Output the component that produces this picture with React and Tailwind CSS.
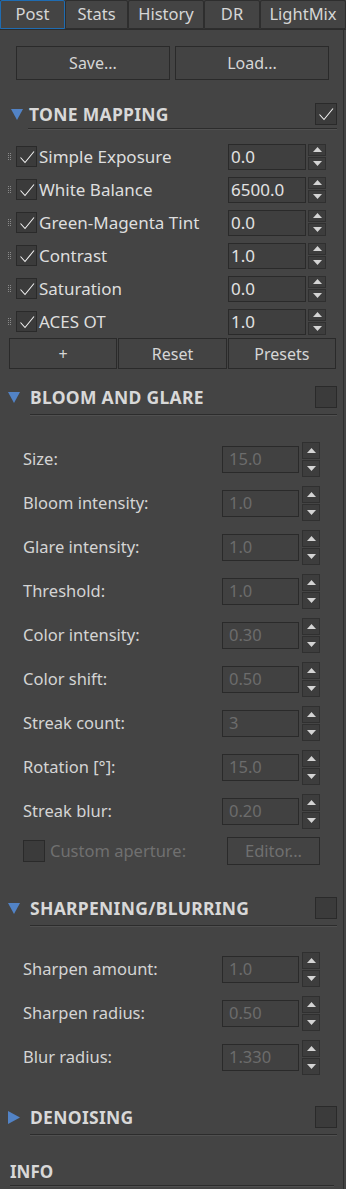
import React from "react";

const tabs = [
  { label: "Post", w: "w-[65px]", active: true },
  { label: "Stats", w: "w-[63px]" },
  { label: "History", w: "w-[76px]" },
  { label: "DR", w: "w-[56px]" },
  { label: "LightMix", w: "w-[86px]" },
];

const toneRows = [
  { label: "Simple Exposure", value: "0.0" },
  { label: "White Balance", value: "6500.0" },
  { label: "Green-Magenta Tint", value: "0.0" },
  { label: "Contrast", value: "1.0" },
  { label: "Saturation", value: "0.0" },
  { label: "ACES OT", value: "1.0" },
];

const bloomRows = [
  { label: "Size:", value: "15.0" },
  { label: "Bloom intensity:", value: "1.0" },
  { label: "Glare intensity:", value: "1.0" },
  { label: "Threshold:", value: "1.0" },
  { label: "Color intensity:", value: "0.30" },
  { label: "Color shift:", value: "0.50" },
  { label: "Streak count:", value: "3" },
  { label: "Rotation [°]:", value: "15.0" },
  { label: "Streak blur:", value: "0.20" },
];

const sharpenRows = [
  { label: "Sharpen amount:", value: "1.0" },
  { label: "Sharpen radius:", value: "0.50" },
  { label: "Blur radius:", value: "1.330" },
];

function Check({ checked, size = "w-[21px] h-[21px]" }) {
  return (
    <div className={`${size} shrink-0 border border-[#2a2a2a] bg-[#3b3b3b] flex items-center justify-center`}>
      {checked && (
        <svg width="16" height="14" viewBox="0 0 16 14">
          <polyline points="1.5,7.5 6,12.5 15,1.5" fill="none" stroke="#f2f2f2" strokeWidth="1.1" />
        </svg>
      )}
    </div>
  );
}

function Arrow({ up }) {
  return (
    <svg width="9" height="5" viewBox="0 0 9 5">
      <polygon points={up ? "0,5 9,5 4.5,0" : "0,0 9,0 4.5,5"} fill="#d4d4d4" />
    </svg>
  );
}

function Spinner({ tall }) {
  return (
    <div className={`flex flex-col gap-[1px] w-[18px] shrink-0 ${tall ? "h-[35px]" : "h-[26px]"}`}>
      <div className="flex-1 border border-[#303030] bg-[#3d3d3d] flex items-center justify-center">
        <Arrow up />
      </div>
      <div className="flex-1 border border-[#303030] bg-[#3d3d3d] flex items-center justify-center">
        <Arrow />
      </div>
    </div>
  );
}

function Grip() {
  return (
    <div className="grid grid-cols-2 gap-[1px] w-[3px] shrink-0">
      {Array.from({ length: 8 }).map((_, i) => (
        <div key={i} className="w-[1px] h-[1px] bg-[#8a8a8a]" />
      ))}
    </div>
  );
}

function Triangle({ open }) {
  return open ? (
    <svg width="12" height="11" viewBox="0 0 12 11">
      <polygon points="0,0 12,0 6,11" fill="#5283c6" />
    </svg>
  ) : (
    <svg width="12" height="13" viewBox="0 0 12 13">
      <polygon points="0,0 12,6.5 0,13" fill="#5283c6" />
    </svg>
  );
}

function SectionHeader({ title, open, checked, tone }) {
  return (
    <div className={tone ? "pl-[11px] pr-[6px]" : "pl-[8px] pr-[6px]"}>
      <div className="flex items-center h-[22px]">
        <div className="w-[12px] flex justify-center">
          <Triangle open={open} />
        </div>
        <span className={`${tone ? "ml-[6px]" : "ml-[10px]"} flex-1 text-[17.5px] font-bold text-[#d8d8d8] tracking-[0.3px]`}>
          {title}
        </span>
        <Check checked={checked} size="w-[22px] h-[22px]" />
      </div>
      <div className={`${tone ? "ml-[17px] mt-[3px]" : "ml-[22px] mt-[6px]"} h-[2px] border-t border-[#2c2c2c] border-b border-b-[#505050]`} />
    </div>
  );
}

function ToneRow({ label, value }) {
  return (
    <div className="flex items-center h-[33px] pl-[8px] pr-[17px]">
      <Grip />
      <div className="ml-[5px]">
        <Check checked />
      </div>
      <span className="ml-[2px] flex-1 text-[17px] text-[#dedede] whitespace-nowrap">{label}</span>
      <div className="w-[78px] h-[26px] border border-[#2a2a2a] bg-[#3f3f3f] flex items-center pl-[2px] text-[17px] text-[#e2e2e2]">
        {value}
      </div>
      <div className="ml-[2px]">
        <Spinner />
      </div>
    </div>
  );
}

function ParamRow({ label, value }) {
  return (
    <div className="flex items-center h-[44px] pl-[23px] pr-[23px]">
      <span className="flex-1 text-[16.5px] text-[#d4d4d4] whitespace-nowrap">{label}</span>
      <div className="w-[77px] h-[27px] border border-[#2a2a2a] bg-[#414141] flex items-center pl-[6px] text-[16.5px] text-[#6c6c6c]">
        {value}
      </div>
      <div className="ml-[3px]">
        <Spinner tall />
      </div>
    </div>
  );
}

export default function App() {
  return (
    <div className="w-[346px] min-h-[1189px] bg-[#444444] font-['Noto_Sans','Open_Sans',sans-serif] select-none">
      {/* tabs */}
      <div className="flex h-[30px] border-b border-[#2c2c2c] bg-[#3e3e3e]">
        {tabs.map((t) => (
          <div
            key={t.label}
            className={`${t.w} h-full flex items-center justify-center bg-[#444444] text-[16.5px] text-[#d6d6d6] rounded-t-[2px] border ${
              t.active ? "border-[#1f6cb2]" : "border-[#2e2e2e]"
            }`}
          >
            {t.label}
          </div>
        ))}
      </div>

      <div className="w-[344px] border-r border-[#2e2e2e] min-h-[1159px]">
        {/* save / load */}
        <div className="flex gap-[5px] pl-[16px] pt-[16px]">
          <div className="w-[154px] h-[34px] border border-[#2a2a2a] bg-[#434343] flex items-center justify-center text-[16px] text-[#d6d6d6]">
            Save...
          </div>
          <div className="w-[154px] h-[34px] border border-[#2a2a2a] bg-[#434343] flex items-center justify-center text-[16px] text-[#d6d6d6]">
            Load...
          </div>
        </div>

        {/* tone mapping */}
        <div className="mt-[23px]">
          <SectionHeader title="TONE MAPPING" open checked tone />
        </div>
        <div className="mt-[10px]">
          {toneRows.map((r) => (
            <ToneRow key={r.label} {...r} />
          ))}
        </div>
        <div className="flex pl-[9px] pr-[7px] gap-[1px] h-[31px]">
          {["+", "Reset", "Presets"].map((b) => (
            <div
              key={b}
              className="flex-1 border border-[#2a2a2a] bg-[#434343] flex items-center justify-center text-[16px] text-[#d6d6d6]"
            >
              {b}
            </div>
          ))}
        </div>

        {/* bloom and glare */}
        <div className="mt-[17px]">
          <SectionHeader title="BLOOM AND GLARE" open />
        </div>
        <div className="mt-[21px]">
          {bloomRows.map((r) => (
            <ParamRow key={r.label} {...r} />
          ))}
        </div>
        <div className="flex items-center h-[36px] pl-[23px] pr-[23px]">
          <Check size="w-[22px] h-[22px]" />
          <span className="ml-[5px] flex-1 text-[16.5px] text-[#707070]">Custom aperture:</span>
          <div className="w-[93px] h-[28px] border border-[#2a2a2a] bg-[#434343] flex items-center justify-center text-[16.5px] text-[#707070]">
            Editor...
          </div>
        </div>

        {/* sharpening */}
        <div className="mt-[28px]">
          <SectionHeader title="SHARPENING/BLURRING" open />
        </div>
        <div className="mt-[20px]">
          {sharpenRows.map((r) => (
            <ParamRow key={r.label} {...r} />
          ))}
        </div>

        {/* denoising */}
        <div className="mt-[27px]">
          <SectionHeader title="DENOISING" />
        </div>

        {/* info */}
        <div className="mt-[25px] pl-[10px] pr-[9px]">
          <div className="h-[22px] flex items-center text-[17px] font-bold text-[#d8d8d8]">INFO</div>
          <div className="mt-[2px] h-[2px] border-t border-[#2c2c2c] border-b border-b-[#505050]" />
        </div>
      </div>
    </div>
  );
}
